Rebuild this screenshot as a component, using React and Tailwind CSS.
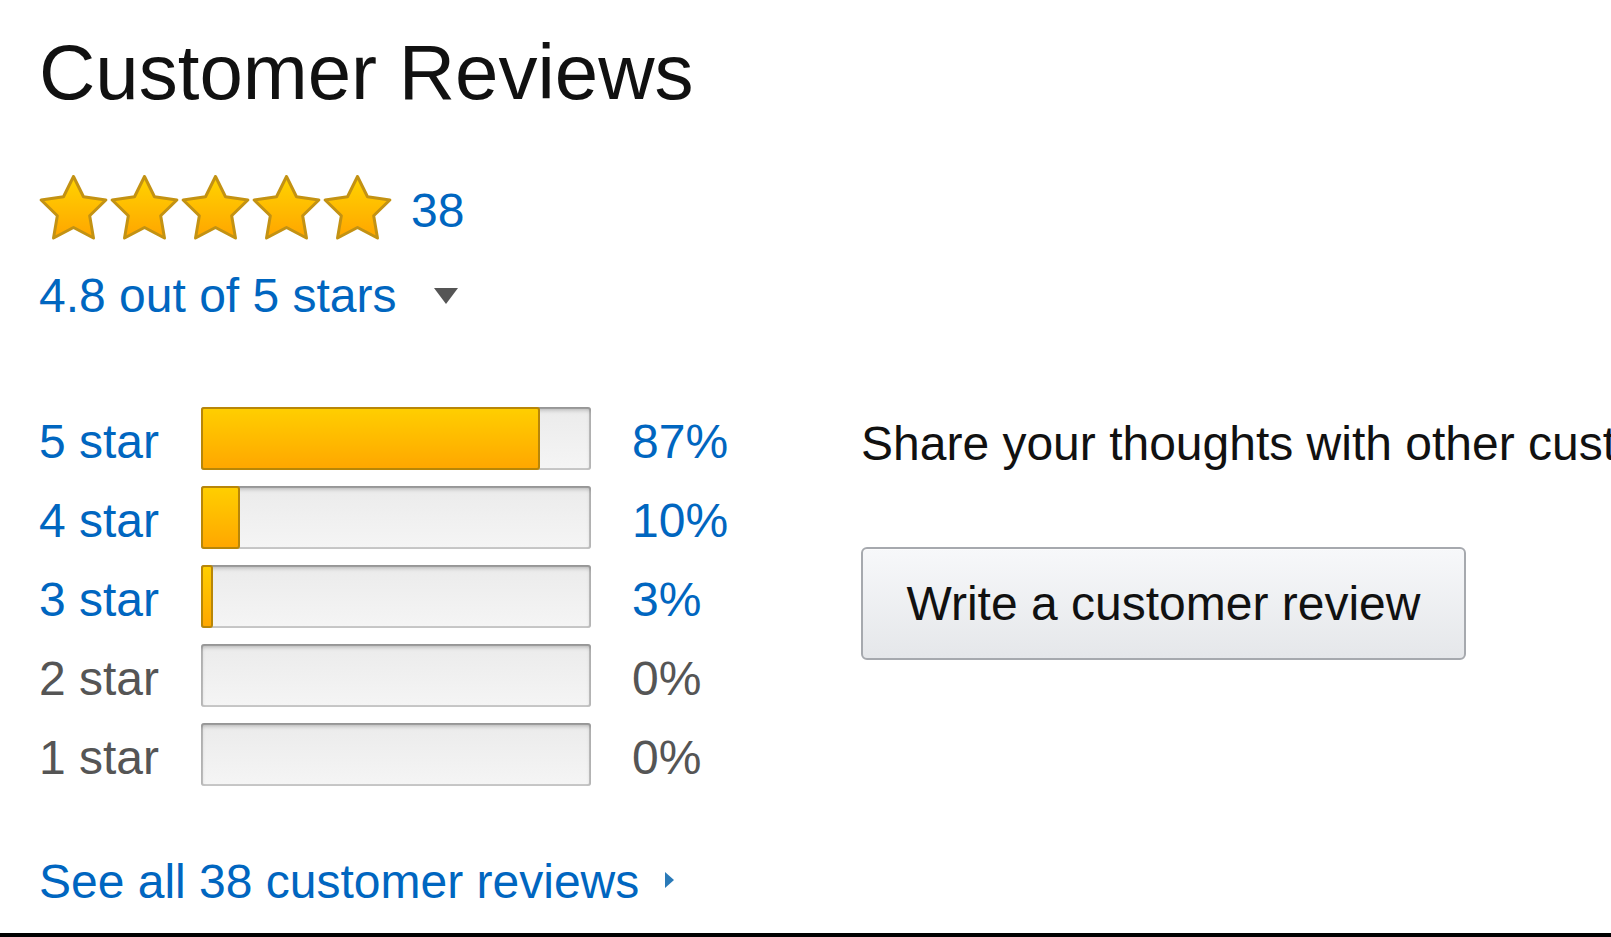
import React from "react";

const ratings = [
  { label: "5 star", pct: 87, active: true },
  { label: "4 star", pct: 10, active: true },
  { label: "3 star", pct: 3, active: true },
  { label: "2 star", pct: 0, active: false },
  { label: "1 star", pct: 0, active: false },
];

// five-point star, plumper than the regular one
const starPoints = (() => {
  const cx = 34.5;
  const cy = 35.5;
  const R = 34;
  const r = 17;
  const pts = [];
  for (let i = 0; i < 10; i++) {
    const a = ((-90 + i * 36) * Math.PI) / 180;
    const rad = i % 2 === 0 ? R : r;
    pts.push(`${(cx + rad * Math.cos(a)).toFixed(2)},${(cy + rad * Math.sin(a)).toFixed(2)}`);
  }
  return pts.join(" ");
})();

const Star = ({ id }) => (
  <svg width="69" height="65" viewBox="0 0 69 65" className="block">
    <defs>
      <linearGradient id={`star-grad-${id}`} x1="0" y1="0" x2="0" y2="1">
        <stop offset="0%" stopColor="#ffd400" />
        <stop offset="100%" stopColor="#ffa500" />
      </linearGradient>
    </defs>
    <polygon
      points={starPoints}
      fill={`url(#star-grad-${id})`}
      stroke="#c39213"
      strokeWidth="3"
      strokeLinejoin="round"
    />
  </svg>
);

const App = () => {
  return (
    <div className="h-screen w-full overflow-hidden border-b-4 border-black bg-white pl-[39px] pt-[33px] font-['Liberation_Sans',Arial,sans-serif]">
      {/* Header */}
      <h1 className="whitespace-nowrap text-[78px] font-normal leading-none text-[#111]">
        Customer Reviews
      </h1>

      {/* Average */}
      <div className="mt-[64px] flex items-start">
        <div className="flex gap-[2px]">
          {[0, 1, 2, 3, 4].map((i) => (
            <Star key={i} id={i} />
          ))}
        </div>
        <span className="ml-[19px] mt-[12px] text-[48px] leading-none text-[#0066c0]">38</span>
      </div>

      <div className="mt-[32px] flex items-center">
        <span className="text-[48px] leading-none text-[#0066c0]">4.8 out of 5 stars</span>
        <svg width="24" height="16" viewBox="0 0 24 16" className="ml-[37px] block">
          <polygon points="0,0 24,0 12,16" fill="#555" />
        </svg>
      </div>

      {/* Histogram + write review */}
      <div className="mt-[87px] flex">
        <div className="flex flex-col gap-[16px]">
          {ratings.map((r) => (
            <div key={r.label} className="flex h-[63px] items-center">
              <span
                className={`mt-[6px] w-[162px] whitespace-nowrap text-[48px] leading-none ${
                  r.active ? "text-[#0066c0]" : "text-[#555]"
                }`}
              >
                {r.label}
              </span>
              <div className="flex h-[63px] w-[390px] rounded-[3px] bg-gradient-to-b from-[#ebebeb] to-[#f5f5f5] shadow-[inset_0_3px_4px_rgba(0,0,0,0.25),inset_0_0_0_2px_rgba(0,0,0,0.18)]">
                {r.pct > 0 && (
                  <div
                    className="h-full rounded-[3px] border-2 border-[#b88608] bg-gradient-to-b from-[#ffce00] to-[#ffa700]"
                    style={{ width: `${r.pct}%` }}
                  />
                )}
              </div>
              <span
                className={`ml-[41px] mt-[6px] w-[229px] text-[48px] leading-none ${
                  r.active ? "text-[#0066c0]" : "text-[#555]"
                }`}
              >
                {r.pct}%
              </span>
            </div>
          ))}
        </div>

        <div className="flex flex-col">
          <p className="mt-[13px] whitespace-nowrap text-[48px] leading-none text-[#111]">
            Share your thoughts with other customers
          </p>
          <button className="mt-[79px] h-[113px] w-[605px] rounded-[6px] border-2 border-[#a6a9ae] bg-gradient-to-b from-[#f7f8fa] to-[#e5e7ea] text-[48px] leading-none text-[#111] shadow-[0_1px_0_rgba(255,255,255,0.6)_inset]">
            Write a customer review
          </button>
        </div>
      </div>

      {/* Footer link */}
      <div className="mt-[72px] flex items-center">
        <span className="whitespace-nowrap text-[48px] leading-none text-[#0066c0]">
          See all 38 customer reviews
        </span>
        <svg width="9" height="16" viewBox="0 0 9 16" className="-mt-[4px] ml-[26px] block">
          <polygon points="0,0 9,8 0,16" fill="#2a7ab8" />
        </svg>
      </div>
    </div>
  );
};

export default App;
